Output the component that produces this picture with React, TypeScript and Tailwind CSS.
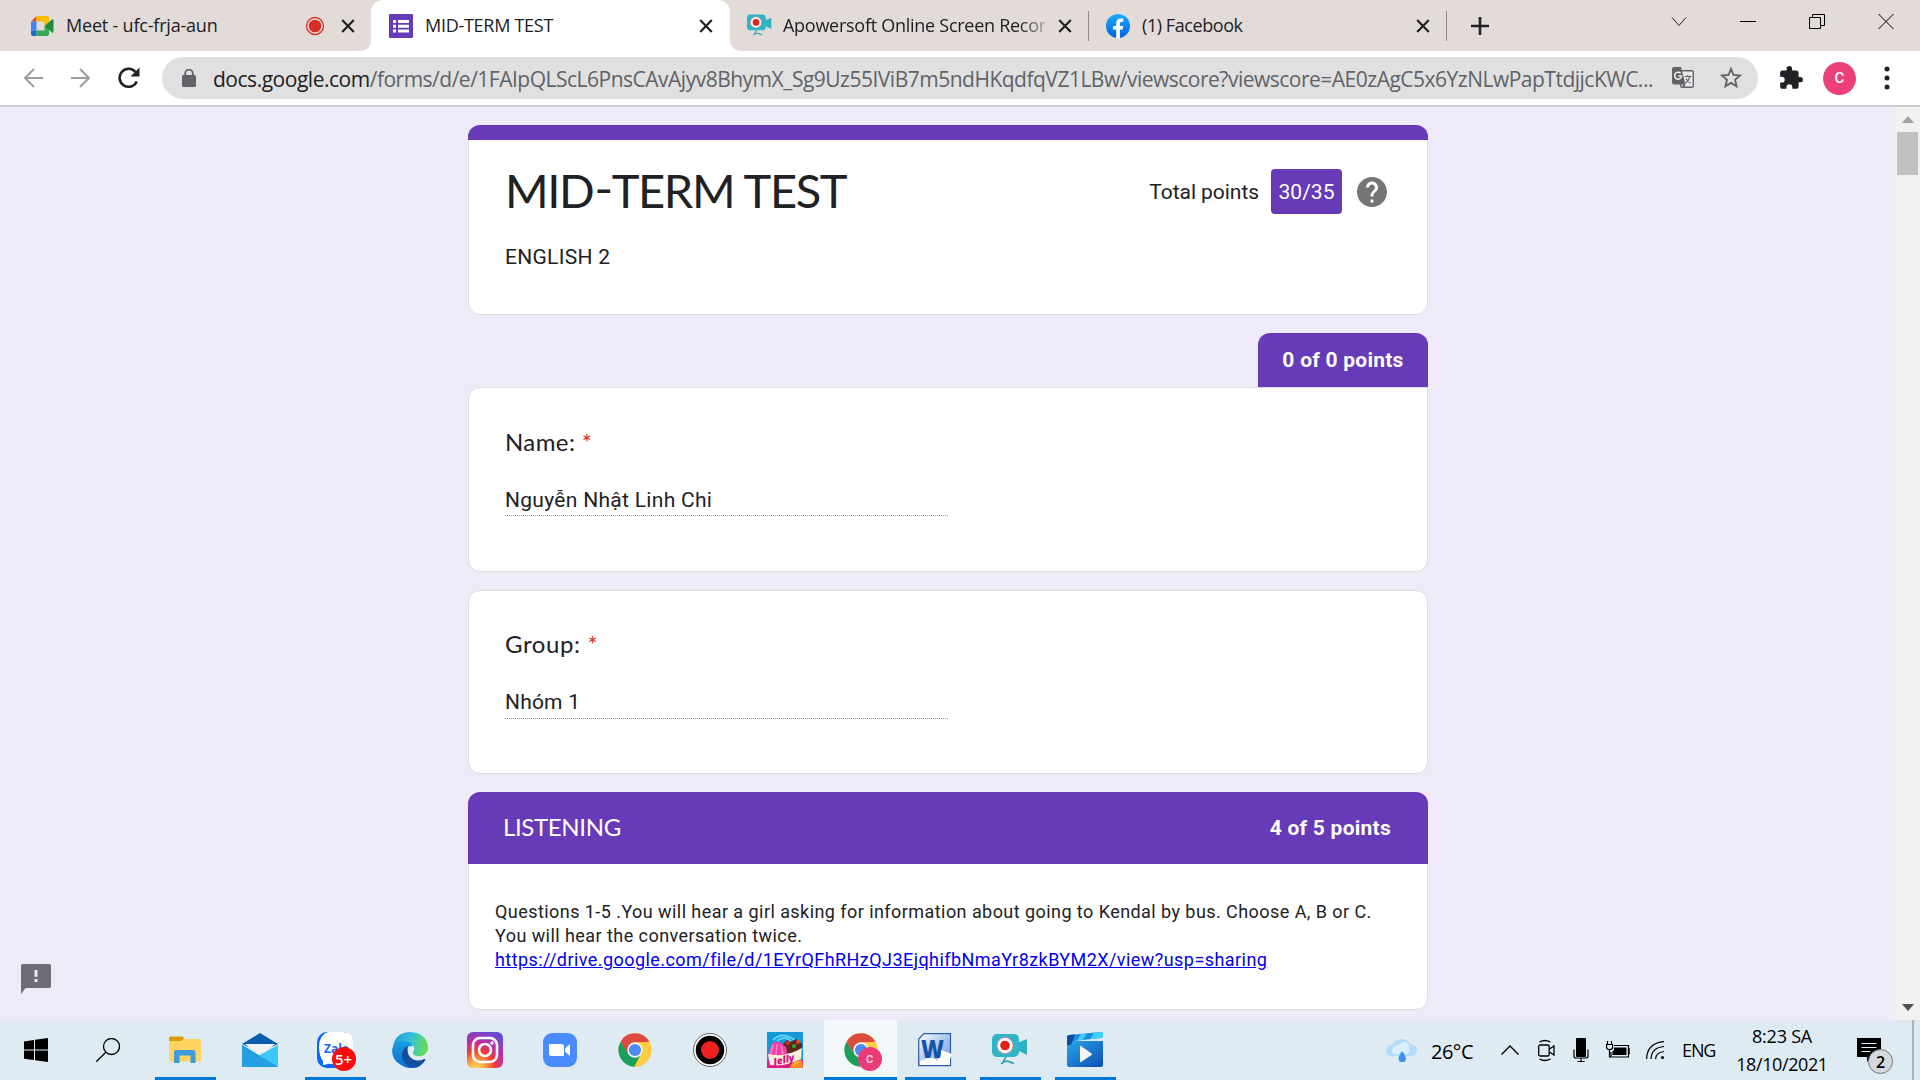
import React from "react";

type Kids = { children?: React.ReactNode };

const CloseX = () => (
  <svg className="size-[14px] shrink-0" viewBox="0 0 14 14" stroke="#202124" strokeWidth="2.2" fill="none">
    <path d="M1.2 1l11.6 12M12.8 1L1.2 13" />
  </svg>
);

const Sep = () => <div className="h-[30px] w-px shrink-0 bg-[#8f8b89]" />;

const CameraIcon = ({ className }: { className: string }) => (
  <svg className={className} viewBox="0 0 36 36">
    <path d="M25 11l10-4v16l-10-5z" fill="#2fb1c4" />
    <rect x="0" y="2" width="27" height="23" rx="5" fill="#2fb5c8" />
    <circle cx="13" cy="13.5" r="8" fill="#fff" stroke="#d88" strokeWidth="1" />
    <circle cx="13" cy="13.5" r="4.8" fill="#e32119" />
    <path d="M14 25l-3 5M9 32q4-4 8-2.500q3 2 5 1.500" fill="none" stroke="#2fa3b4" strokeWidth="1.600" />
  </svg>
);

const ChromeIcon = () => (
  <svg className="size-[34px]" viewBox="0 0 48 48">
    <circle cx="24" cy="24" r="23.500" fill="#ffcd40" />
    <path d="M24 .5A23.500 23.500 0 0 1 44.400 12.500L24 13.500 14 30 3.700 12.200A23.500 23.500 0 0 1 24 .5z" fill="#db4c3f" />
    <path d="M3.700 12.200L14.500 30 24 34.500l8-4L23 47.500A23.500 23.500 0 0 1 3.700 12.200z" fill="#17a05e" />
    <path d="M24 13.500h20.800A23.500 23.500 0 0 1 23 47.500l10-17z" fill="#ffcd40" />
    <circle cx="24" cy="24" r="10.800" fill="#f4f4f4" />
    <circle cx="24" cy="24" r="8.600" fill="#4c8bf5" />
  </svg>
);

function TabBar() {
  return (
    <header className="flex h-[51px] shrink-0 items-stretch bg-[#e3dbd7] font-['Open_Sans',sans-serif] text-[18px] leading-[24px] text-[#202124]">
      <div className="flex w-[371px] items-center pr-[16px] pl-[31px]">
        <svg className="h-[20px] w-[23px]" viewBox="0 0 23 20">
          <path d="M0 5.500L5.500 0v5.500z" fill="#ea4335" />
          <path d="M5.500 0H16q2 0 2 2v5.500l-4.500 2.500V5.500h-8z" fill="#fbbc04" />
          <path d="M0 5.500h5.500v9H0z" fill="#4285f4" />
          <path d="M0 14.500h5.500V20H2q-2 0-2-2z" fill="#1967d2" />
          <path d="M5.500 14.500h8V10l4.500 3.500V18q0 2-2 2H5.500z" fill="#34a853" />
          <path d="M13.500 10L21 3.500q1.500-1 1.500.8v11.400q0 1.800-1.500.8z" fill="#1e8e3e" />
        </svg>
        <span className="ml-[12px] pb-px tracking-[-0.2px]">Meet - ufc-frja-aun</span>
        <svg className="ml-auto size-[20px]" viewBox="0 0 20 20">
          <circle cx="10" cy="10" r="8.500" fill="none" stroke="#d93025" strokeWidth="1.300" />
          <circle cx="10" cy="10" r="6.300" fill="#d93025" />
        </svg>
        <span className="ml-[16px] flex"><CloseX /></span>
      </div>
      <div className="relative flex w-[359px] items-center rounded-t-[12px] bg-white pr-[17px] pl-[18px]">
        <span className="absolute bottom-0 -left-[10px] size-[10px] bg-white"><span className="block size-full rounded-br-[10px] bg-[#e3dbd7]" /></span>
        <span className="absolute -right-[10px] bottom-0 size-[10px] bg-white"><span className="block size-full rounded-bl-[10px] bg-[#e3dbd7]" /></span>
        <svg className="size-[24px]" viewBox="0 0 24 24">
          <rect width="24" height="24" rx="1" fill="#673ab7" />
          <path d="M4 6h3v3H4zM9 6h11v3H9zM4 10.700h3v3H4zM9 10.700h11v3H9zM4 15.400h3v3H4zM9 15.400h11v3H9z" fill="#fff" />
        </svg>
        <span className="ml-[12px] pb-px tracking-[-0.28px]">MID-TERM TEST</span>
        <span className="ml-auto flex"><CloseX /></span>
      </div>
      <div className="flex w-[359px] items-center pl-[17px]">
        <CameraIcon className="size-[25px]" />
        <span className="ml-[11px] w-[262px] overflow-hidden pb-px whitespace-nowrap tracking-[-0.27px] [mask-image:linear-gradient(to_right,black_90%,#0004)]">Apowersoft Online Screen Record</span>
        <span className="ml-[13px] flex"><CloseX /></span>
        <span className="ml-auto flex"><Sep /></span>
      </div>
      <div className="flex w-[358px] items-center pl-[17px]">
        <svg className="size-[24px]" viewBox="0 0 24 24">
          <defs><linearGradient id="fb" x2="0" y2="1"><stop stopColor="#18acfe" /><stop offset="1" stopColor="#0163e0" /></linearGradient></defs>
          <circle cx="12" cy="12" r="12" fill="url(#fb)" />
          <path d="M16.600 15.500l.6-3.500h-3.300V9.700c0-1 .5-1.900 1.900-1.900h1.500v-3s-1.400-.2-2.700-.2c-2.700 0-4.400 1.700-4.400 4.600V12H7.100v3.500h3.100v8.400a12 12 0 0 0 3.700 0v-8.400z" fill="#fff" />
        </svg>
        <span className="ml-[12px] pb-px tracking-[-0.43px]">(1) Facebook</span>
        <span className="mr-[16px] ml-auto flex"><CloseX /></span>
        <Sep />
      </div>
      <div className="flex flex-1 items-center pl-[24px]">
        <svg className="size-[18px]" viewBox="0 0 18 18" stroke="#202124" strokeWidth="2.600"><path d="M9 0v18M0 9h18" /></svg>
        <div className="ml-auto flex h-full items-start gap-[53px] pt-[14px] pr-[26px]">
          <svg className="h-[15px] w-[16px]" viewBox="0 0 16 15" fill="none" stroke="#202124"><path d="M1 3.500l7 8 7-8" /></svg>
          <svg className="h-[15px] w-[16px]" viewBox="0 0 16 15" fill="none" stroke="#000"><path d="M0 7.500h16" /></svg>
          <svg className="h-[15px] w-[16px]" viewBox="0 0 16 15" fill="none" stroke="#000"><path d="M.5 3.500h11v11H.5zM3.500 3.500v-3h12v11h-4" /></svg>
          <svg className="h-[15px] w-[16px]" viewBox="0 0 16 15" fill="none" stroke="#000"><path d="M.5 0l15 15M15.500 0l-15 15" /></svg>
        </div>
      </div>
    </header>
  );
}

function Toolbar() {
  return (
    <div className="flex h-[56px] shrink-0 items-center border-b-2 border-[#cacacd] bg-white pl-[23px]">
      <svg className="size-[20px]" viewBox="0 0 20 20" fill="none" stroke="#9b9da0" strokeWidth="2"><path d="M20 10H2M11 1l-9 9 9 9" /></svg>
      <svg className="ml-[28px] size-[20px]" viewBox="0 0 20 20" fill="none" stroke="#9b9da0" strokeWidth="2"><path d="M0 10h18M9 1l9 9-9 9" /></svg>
      <svg className="ml-[27px] size-[22px]" viewBox="0 0 22 22" fill="none" stroke="#202124" strokeWidth="2.600"><path d="M18.800 14.500A9 9 0 1 1 17.500 5" /><path d="M21.500.5v9h-9z" fill="#202124" stroke="none" /></svg>
      <div className="ml-[22px] flex h-[42px] w-[1596px] items-center rounded-full bg-[#e0e0e0] pl-[20px] font-['Open_Sans',sans-serif] text-[21px] leading-[30px] whitespace-nowrap text-[#5f6368]">
        <svg className="h-[18px] w-[14px]" viewBox="0 0 14 18"><rect y="6" width="14" height="12" rx="1.500" fill="#5f6368" /><path d="M3.200 7V4.500a3.800 3.800 0 0 1 7.600 0V7" fill="none" stroke="#5f6368" strokeWidth="1.800" /></svg>
        <span className="ml-[17px] pt-[2px] tracking-[-0.48px] text-[#202124]">docs.google.com</span>
        <span className="pt-[2px] tracking-[-0.5px]">/forms/d/e/1FAIpQLScL6PnsCAvAjyv8BhymX_Sg9Uz55IViB7m5ndHKqdfqVZ1LBw/viewscore?viewscore=AE0zAgC5x6YzNLwPapTtdjjcKWC...</span>
        <svg className="ml-auto size-[22px]" viewBox="0 0 22 22">
          <rect x="8.700" y="3.700" width="12.600" height="16.500" rx="1.500" fill="#e8e8e8" stroke="#5f6368" strokeWidth="1.400" />
          <path d="M2 0h7l4.500 17.500H2q-2 0-2-2V2q0-2 2-2z" fill="#5f6368" />
          <path d="M10.500 17.500h3l-2 4z" fill="#5f6368" />
          <path d="M8.700 6.300A3.500 3.500 0 1 0 9.600 9H6.300" fill="none" stroke="#eee" strokeWidth="1.500" />
          <path d="M12.500 9.500h7M15.800 8v1.500M18 9.500q-1.200 4.500-4.500 6.500M14 11.500q2 3.500 4.500 4.500" fill="none" stroke="#5f6368" strokeWidth="1.200" />
        </svg>
        <svg className="mr-[16px] ml-[26px] size-[22px]" viewBox="0 0 24 24" fill="none" stroke="#5f6368" strokeWidth="2"><path d="M12 2l2.700 6.700 7.200.6-5.500 4.700 1.700 7L12 17.300 5.900 21l1.700-7L2.100 9.300l7.200-.6z" /></svg>
      </div>
      <svg className="ml-[20px] size-[26px]" viewBox="0 0 24 24" fill="#202124"><path d="M20.500 11H19V7c0-1.100-.9-2-2-2h-4V3.500a2.500 2.500 0 0 0-5 0V5H4c-1.100 0-2 .9-2 2v3.800h1.500a2.700 2.700 0 0 1 0 5.400H2V20c0 1.100.9 2 2 2h3.800v-1.500a2.700 2.700 0 0 1 5.400 0V22H17c1.100 0 2-.9 2-2v-4h1.500a2.500 2.500 0 0 0 0-5z" /></svg>
      <div className="ml-[19px] flex size-[33px] items-center justify-center rounded-full bg-[#ec407a] font-['Roboto',sans-serif] text-[15px] font-medium text-white">C</div>
      <svg className="ml-[28px] h-[24px] w-[6px]" viewBox="0 0 6 24" fill="#202124"><circle cx="3" cy="3" r="2.500" /><circle cx="3" cy="12" r="2.500" /><circle cx="3" cy="21" r="2.500" /></svg>
    </div>
  );
}

function FormPage() {
  return (
    <main className="flex min-h-0 flex-1 bg-[#eeeaf8] font-['Roboto',sans-serif] text-[21px] leading-[30px] text-[#202124]">
      <div className="flex w-[468px] items-end pb-[23px] pl-[18px]">
        <svg className="size-[36px]" viewBox="0 0 24 24" fill="#706c75"><path d="M20.900 2H3.100C2.500 2 2 2.500 2 3v19l3-4h15.900c.6 0 1.100-.5 1.100-1V3c0-.5-.5-1-1.100-1zM13 14h-2v-2h2zm0-3.500h-2V6h2z" /></svg>
      </div>
      <div className="flex w-[960px] flex-col pt-[18px]">
        <section className="flex h-[190px] flex-col rounded-[12px] border border-[#dadce0] bg-white">
          <div className="-mx-px -mt-px h-[15px] shrink-0 rounded-t-[12px] bg-[#673ab7]" />
          <div className="flex justify-between pt-[19px] pr-[37px] pl-[36px]">
            <h1 className="pt-px font-['Lato',sans-serif] text-[47px] leading-[60px] tracking-[-1.35px]">MID<span className="inline-block -translate-y-[3px] scale-x-110 px-[1px]">-</span>TERM TEST</h1>
            <div className="mt-[10px] flex h-[45px] items-center">
              <span className="tracking-[-0.05px]">Total points</span>
              <span className="ml-[12px] flex h-[45px] w-[71px] items-center justify-center rounded-[4px] bg-[#673ab7] text-white">30/35</span>
              <svg className="ml-[12px] size-[36px]" viewBox="0 0 24 24" fill="#757575"><path d="M12 2C6.480 2 2 6.480 2 12s4.480 10 10 10 10-4.480 10-10S17.520 2 12 2zm1 17h-2v-2h2v2zm2.070-7.750l-.9.920C13.450 12.900 13 13.500 13 15h-2v-.5c0-1.100.45-2.100 1.170-2.830l1.240-1.260c.37-.36.59-.86.59-1.410 0-1.100-.9-2-2-2s-2 .9-2 2H8c0-2.210 1.790-4 4-4s4 1.790 4 4c0 .88-.36 1.680-.93 2.250z" /></svg>
            </div>
          </div>
          <p className="mt-[22px] pl-[36px] tracking-[0.28px]">ENGLISH 2</p>
        </section>
        <div className="mt-[18px] flex h-[54px] w-[170px] items-center justify-center self-end rounded-t-[12px] bg-[#673ab7] font-bold tracking-[0.25px] text-white">0 of 0 points</div>
        <section className="h-[185px] rounded-l-[12px] rounded-br-[12px] border border-[#dadce0] bg-white px-[36px] pt-[36px]">
          <h2 className="font-['Lato',sans-serif] text-[24px] leading-[36px] tracking-[0.4px]">Name: <span className="text-[#d93025]">*</span></h2>
          <p className="mt-[25px] w-[443px] border-b border-dotted border-[#97979c] tracking-[0.3px]">Nguyễn Nhật Linh Chi</p>
        </section>
        <section className="mt-[18px] h-[184px] rounded-[12px] border border-[#dadce0] bg-white px-[36px] pt-[35px]">
          <h2 className="font-['Lato',sans-serif] text-[24px] leading-[36px] tracking-[0.6px]">Group: <span className="text-[#d93025]">*</span></h2>
          <p className="mt-[25px] w-[443px] border-b border-dotted border-[#97979c] pb-px tracking-[0.2px]">Nhóm 1</p>
        </section>
        <section className="mt-[18px] h-[218px] rounded-[12px] border border-[#dadce0] bg-white">
          <div className="-mx-px -mt-px flex h-[72px] items-center justify-between rounded-t-[12px] bg-[#673ab7] pr-[37px] pl-[35px] text-white">
            <h2 className="pb-[2px] font-['Lato',sans-serif] text-[24px] leading-[36px] tracking-[-0.35px]">LISTENING</h2>
            <span className="font-bold tracking-[0.25px]">4 of 5 points</span>
          </div>
          <div className="pt-[36px] pl-[26px] text-[18px] leading-[24px] tracking-[0.44px] whitespace-nowrap">
            <p>Questions 1-5 .You will hear a girl asking for information about going to Kendal by bus. Choose A, B or C.</p>
            <p>You will hear the conversation twice.</p>
            <a className="text-[#0000ee] underline">https://drive.google.com/file/d/1EYrQFhRHzQJ3EjqhifbNmaYr8zkBYM2X/view?usp=sharing</a>
          </div>
        </section>
      </div>
      <div className="ml-auto flex w-[25px] flex-col items-center bg-[#f1f1f1] py-[9px]">
        <svg className="h-[7px] w-[12px]" viewBox="0 0 12 7" fill="#a3a3a3"><path d="M0 7l6-7 6 7z" /></svg>
        <div className="mt-[9px] h-[43px] w-[21px] bg-[#c1c1c1]" />
        <svg className="mt-auto h-[7px] w-[12px]" viewBox="0 0 12 7" fill="#505050"><path d="M0 0l6 7 6-7z" /></svg>
      </div>
    </main>
  );
}

const TaskItem = ({ children, open }: Kids & { open?: boolean }) => (
  <div className="flex w-[75px] flex-col items-center">
    <div className="flex h-[57px] items-center pt-[3px] pr-[2px]">{children}</div>
    {open && <div className="h-[3px] w-[61px] bg-[#0078d7]" />}
  </div>
);

function Taskbar() {
  return (
    <footer className="flex h-[60px] shrink-0 bg-[#dfebf3] font-['Open_Sans',sans-serif] text-black">
      <div className="flex w-[72px] items-center justify-center">
        <svg className="size-[24px]" viewBox="0 0 24 24"><path d="M0 3.400l10-1.400v9.600H0zM11 1.800L24 0v11.600H11zM0 12.500h10V22L0 20.700zM11 12.500h13V24l-13-1.700z" /></svg>
      </div>
      <div className="flex w-[76px] items-center pl-[24px]">
        <svg className="size-[24px]" viewBox="0 0 24 24" fill="none" stroke="#000" strokeWidth="1.300"><circle cx="15.500" cy="8.500" r="8" /><path d="M9.800 14.200L.3 23.700" /></svg>
      </div>
      <TaskItem open>
        <svg className="h-[28px] w-[32px]" viewBox="0 0 32 28">
          <path d="M0 2q0-1.500 1.500-1.500h12L15 2.500 13 6H0z" fill="#dd9a05" />
          <path d="M0 5h12l3-2h15.500Q32 3 32 4.500V24q0 1.500-1.500 1.500h-29Q0 25.500 0 24z" fill="#ffd560" />
          <path d="M5 27V16q0-2 2-2h17.500q2 0 2 2v11h-5v-7.500h-11V27z" fill="#3f9be0" />
        </svg>
      </TaskItem>
      <TaskItem>
        <svg className="h-[34px] w-[36px]" viewBox="0 0 36 34">
          <path d="M0 11L18 0l18 11-18 8z" fill="#0a5cad" />
          <path d="M3 11h30L18 23z" fill="#f2f3f5" />
          <path d="M0 12l18 11 18-11v22H0z" fill="#28aaea" />
          <path d="M36 12L16 23l20 11z" fill="#3cc8f4" />
          <path d="M0 12l36 22H0z" fill="#23a0e4" />
        </svg>
      </TaskItem>
      <TaskItem open>
        <div className="relative">
          <svg className="size-[36px]" viewBox="0 0 36 36">
            <rect width="36" height="36" rx="10" fill="#0568ff" />
            <path d="M11 0h15q10 0 10 10v15q0 7-7 7H14q-5 0-8-3-4-5-4-14Q2 3 11 0z" fill="#fff" />
            <path d="M6 28v5q4 0 6-2z" fill="#fff" />
            <text x="7" y="21" fontSize="12" fontWeight="700" fill="#1669f0" fontFamily="Open Sans">Zalo</text>
          </svg>
          <span className="absolute top-[15px] left-[15px] flex size-[24px] items-center justify-center rounded-full bg-[#f90c0c] text-[15px] leading-none font-semibold text-white">5+</span>
        </div>
      </TaskItem>
      <TaskItem>
        <svg className="size-[36px]" viewBox="0 0 36 36">
          <defs>
            <linearGradient id="e1" x1="0" y1=".3" x2="1" y2=".5"><stop stopColor="#1f9be0" /><stop offset=".5" stopColor="#35c1d8" /><stop offset="1" stopColor="#68de4c" /></linearGradient>
            <linearGradient id="e2" x2="0" y2="1"><stop stopColor="#1aa0e0" /><stop offset="1" stopColor="#0b6cd0" /></linearGradient>
          </defs>
          <path d="M1 14Q4 0 18.500 0 30 0 35 10q3 9-3 13-5 2.500-10 0-2-2 0-5 1.500-7-9-8Q5 9 1 14z" fill="url(#e1)" />
          <path d="M0 18Q1 9 10 9q9-.5 11 5-7 0-9 5-2 13 11 17-8 1-14-3Q0 28 0 18z" fill="url(#e2)" />
          <path d="M16 13.500Q9 18 10 25q2 9 12 11 7-1 11.500-8-.3-1.500-1.500-1-8 4-14-2-3.500-4-2-11.500z" fill="#134f9c" />
        </svg>
      </TaskItem>
      <TaskItem>
        <svg className="size-[36px]" viewBox="0 0 36 36">
          <defs>
            <radialGradient id="ig" cx=".25" cy="1.050" r="1.150"><stop stopColor="#fedb70" /><stop offset=".2" stopColor="#fcb045" /><stop offset=".45" stopColor="#f4402f" /><stop offset=".68" stopColor="#c32aa3" /><stop offset="1" stopColor="#5b4fd8" /></radialGradient>
          </defs>
          <rect width="36" height="36" rx="6" fill="url(#ig)" />
          <g fill="none" stroke="#fff" strokeWidth="2.600"><rect x="6" y="6" width="24" height="24" rx="7" /><circle cx="18" cy="18" r="6" /></g>
          <circle cx="25" cy="11" r="1.700" fill="#fff" />
        </svg>
      </TaskItem>
      <TaskItem>
        <svg className="size-[34px]" viewBox="0 0 34 34"><rect width="34" height="34" rx="9" fill="#4a8cff" /><path d="M6 11h12.500q2.500 0 2.500 2.500V23H8.500Q6 23 6 20.500zM22 15.500l5-4.500v12l-5-4.500z" fill="#fff" /></svg>
      </TaskItem>
      <TaskItem><ChromeIcon /></TaskItem>
      <TaskItem>
        <svg className="size-[34px]" viewBox="0 0 34 34"><circle cx="17" cy="17" r="16.500" fill="#fff" stroke="#666" /><circle cx="17" cy="17" r="14.300" fill="#000" /><circle cx="17" cy="17" r="9" fill="#ee2020" /></svg>
      </TaskItem>
      <TaskItem>
        <svg className="size-[36px]" viewBox="0 0 36 36">
          <rect width="36" height="36" fill="#1597d8" />
          <path d="M6 8q9-9 22 0M10 9q7-6 14 0" fill="none" stroke="#5fd6f6" strokeWidth="1.800" />
          <path d="M16 12l4-4 4 2 5-3 6 5v9H18z" fill="#5b2a1c" />
          <circle cx="21" cy="11" r="2" fill="#e02a2a" /><circle cx="27" cy="14" r="2" fill="#39a935" /><circle cx="31" cy="10" r="2" fill="#e8492c" />
          <path d="M0 26L5 12q4-4 9-1l5 4 2 11z" fill="#f33fa0" />
          <path d="M6 13l-3 11M10 12l-1 11M14 13l2 9" stroke="#ff8acb" strokeWidth="1.500" />
          <path d="M0 28h36v8H0z" fill="#e21d87" />
          <path d="M1 22q17 4 34-6l-1 11q-15 8-31 6z" fill="#fbeedd" />
          <text x="6" y="31" fontSize="10" fontWeight="800" fontStyle="italic" fill="#d6127e" fontFamily="Open Sans" transform="rotate(-12 18 28)">Jelly</text>
          <path d="M23 36q1-8 12-8l1 8z" fill="#f68a1c" /><path d="M26 34q2-4 7-4" fill="none" stroke="#ffc14a" strokeWidth="1.400" />
        </svg>
      </TaskItem>
      <div className="mr-[2px] ml-px flex w-[73px] flex-col items-center bg-[#f2f7fa]">
        <div className="relative flex h-[57px] items-center pt-[3px]">
          <ChromeIcon />
          <span className="absolute top-[27px] left-[14px] flex size-[24px] items-center justify-center rounded-full bg-[#e93b77] font-['Roboto',sans-serif] text-[11px] leading-none font-bold text-[#fbd0df]">C</span>
        </div>
        <div className="h-[3px] w-full bg-[#0078d7]" />
      </div>
      <div className="-ml-px flex">
        <TaskItem open>
          <svg className="h-[34px] w-[34px]" viewBox="0 0 34 34">
            <defs><linearGradient id="w" x2="1" y2="1"><stop stopColor="#fff" /><stop offset=".5" stopColor="#a9c6ec" /><stop offset="1" stopColor="#6f9bd8" /></linearGradient></defs>
            <path d="M6 .7h26.500v32H.7V6z" fill="url(#w)" stroke="#2d5ca8" strokeWidth="1.200" />
            <path d="M2 28l10-4 7 3 6-8 7 3v10H2z" fill="#fff" />
            <text x="3" y="24.500" fontSize="25" fontWeight="800" fill="#1453ad" fontFamily="Open Sans" textLength="23" lengthAdjust="spacingAndGlyphs">W</text>
            <path d="M23 17l11 4-3 8-8-3z" fill="#fff" />
          </svg>
        </TaskItem>
        <TaskItem open><CameraIcon className="size-[36px]" /></TaskItem>
        <TaskItem open>
          <svg className="size-[36px]" viewBox="0 0 36 36">
            <defs><linearGradient id="mv" x2="1" y2="1"><stop stopColor="#2ba5e6" /><stop offset="1" stopColor="#0a4fb5" /></linearGradient></defs>
            <path d="M0 5q0-2 2-2L34 0q2 0 2 2v2q0 1.500-2 2L6 9 4 14H0z" fill="#1b8bdd" />
            <path d="M0 5q0-1.500 2-2l6-.6L4 14H0z" fill="#0b4f9e" />
            <path d="M14 1.900l6-.6-4 6.700-6 .6zM27 .7L34 0q2 0 2 2v2q0 1.500-2 2l-11 1.100z" fill="#3cd0fa" />
            <path d="M6 9h30v24q0 2-2 2H2q-2 0-2-2V13h4z" fill="url(#mv)" />
            <path d="M13 14.500v15q0 1 1 .5l10.500-7q1-.8 0-1.500L14 14q-1-.5-1 .5z" fill="#f4f4f4" />
          </svg>
        </TaskItem>
      </div>
      <div className="ml-auto flex items-center">
        <svg className="h-[23px] w-[31px]" viewBox="0 0 31 23">
          <path d="M7 17q-7 0-7-5.500Q0 6 6 6q3-6 9.500-6 6 0 8 5 7.500.5 7.500 6.500 0 5.500-7 5.500z" fill="#b4dcf8" />
          <path d="M6 13q0-7 7-7 3-4 7-3 4 2 3 6 2 5-3 6H8q-2 0-2-2z" fill="#d9effd" />
          <path d="M16 12q4 5 4 7.500a3.700 3.700 0 0 1-7.500 0Q12.500 17 16 12z" fill="#3e95ee" />
        </svg>
        <span className="ml-[14px] w-[54px] pt-[4px] text-[20px] tracking-[-0.5px]">26°C</span>
        <svg className="ml-[16px] h-[10px] w-[18px]" viewBox="0 0 18 10" fill="none" stroke="#000" strokeWidth="1.400"><path d="M.5 9.500L9 1l8.500 8.500" /></svg>
        <svg className="ml-[19px] h-[23px] w-[17px]" viewBox="0 0 17 23" fill="none" stroke="#000" strokeWidth="1.300"><rect x=".7" y="6" width="10.500" height="11" rx="1.500" /><path d="M11.500 10l4.500-3v9l-4.500-3M1.500 3q5-3 11 0M1.500 20q5 3 11 0" /></svg>
        <svg className="ml-[18px] h-[24px] w-[16px]" viewBox="0 0 16 24"><rect x="3" width="10" height="19" rx="1" /><path d="M1 11.500V18q0 2 2 2h10q2 0 2-2v-6.500M8 20v3.500M4.500 23.500h7" fill="none" stroke="#000" strokeWidth="1.200" /></svg>
        <svg className="ml-[17px] h-[18px] w-[24px]" viewBox="0 0 24 18" fill="none" stroke="#000" strokeWidth="1.200"><path d="M8 4.500h14.500v11.500H5V11M22.500 8H24v4.500h-1.500M1.500 0v3M5.500 0v3M.6 3.500h6v3q0 2-3 2t-3-2zM3.500 9v7H5" /><path d="M8 6.500h12.500V14H6.500v-3.500L8 9z" fill="#000" stroke="none" /></svg>
        <svg className="ml-[16px] size-[19px]" viewBox="0 0 19 19" fill="none" stroke="#000" strokeWidth="1.200"><path d="M.6 18Q1 2 18 .6M5 18Q5.500 6.500 18 5.500M9.500 18q.5-6.500 8.500-7.500" /><circle cx="16.500" cy="16.500" r="1.600" fill="#000" stroke="none" /></svg>
        <span className="ml-[17px] w-[36px] text-[18px] tracking-[-1.1px]">ENG</span>
        <div className="ml-[17px] flex w-[94px] flex-col items-center text-[18px] leading-[28px]">
          <span className="tracking-[-0.22px]">8:23 SA</span>
          <span className="tracking-[-0.4px]">18/10/2021</span>
        </div>
        <div className="relative ml-[28px] size-[24px]">
          <svg className="size-[24px]" viewBox="0 0 24 24"><path d="M0 0h24v19h-10l-4 5v-5H0z" /><path d="M4.500 5.500h15M4.500 9.500h15M4.500 13.500h9" stroke="#e6eff5" strokeWidth="1.200" /></svg>
          <span className="absolute top-[11px] left-[11px] flex size-[25px] items-center justify-center rounded-full border border-[#777] bg-[#d5d9dd] text-[16px] leading-none font-semibold">2</span>
        </div>
        <div className="mr-[6px] ml-[31px] h-[60px] w-[2px] bg-[#a9b6be]" />
      </div>
    </footer>
  );
}

export default function App() {
  return (
    <div className="flex h-[1080px] w-[1920px] flex-col overflow-hidden">
      <TabBar />
      <Toolbar />
      <FormPage />
      <Taskbar />
    </div>
  );
}
